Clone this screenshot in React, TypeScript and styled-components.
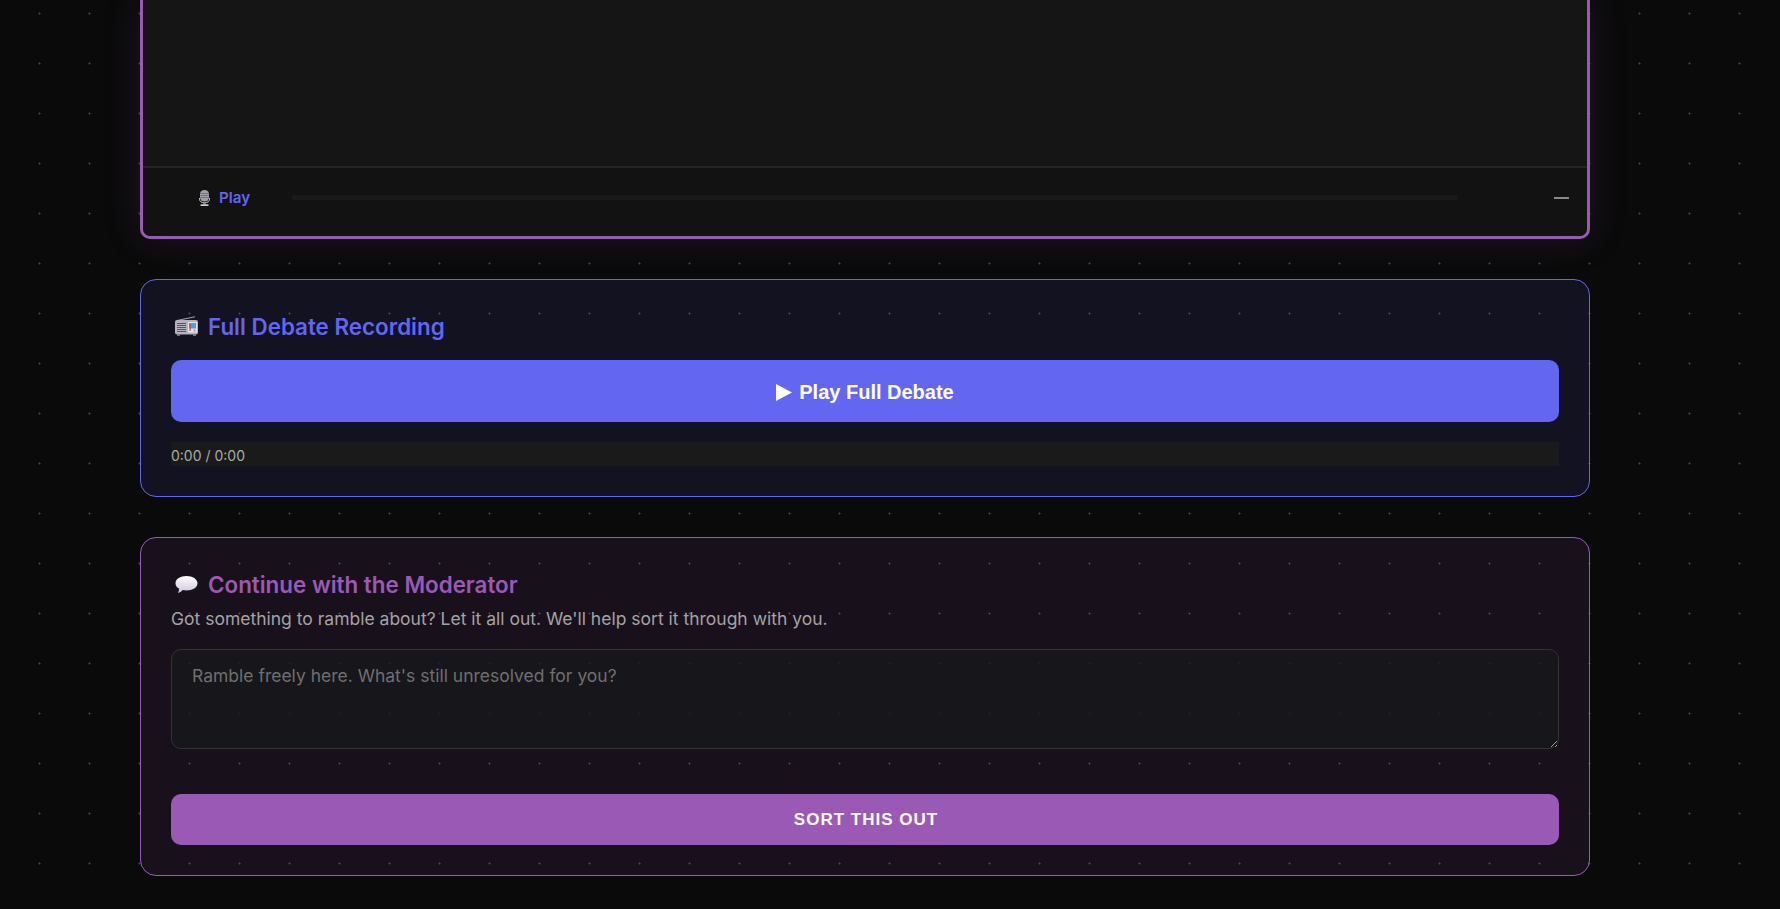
import React from 'react';
import styled, { createGlobalStyle } from 'styled-components';

const GlobalStyle = createGlobalStyle`
  html, body {
    margin: 0;
    padding: 0;
    background-color: #0a0a0a;
  }
  body {
    font-family: 'Inter', 'Liberation Sans', sans-serif;
    color: #e5e5e5;
    overflow: hidden;
  }
`;

const Page = styled.div`
  width: 1780px;
  height: 909px;
  overflow: hidden;
  box-sizing: border-box;
  padding: 0 190px 0 140px;
  display: flex;
  flex-direction: column;
  gap: 40px;
  position: relative;

  &::before {
    content: '';
    position: absolute;
    inset: 0;
    background-image: url("data:image/svg+xml,%3Csvg xmlns='http://www.w3.org/2000/svg' width='50' height='50'%3E%3Cpath d='M38 13.5h3M39.5 12v3' stroke='%232c2c2c' stroke-width='1'/%3E%3Crect x='39' y='13' width='1' height='1' fill='%23454545'/%3E%3C/svg%3E");
    background-size: 50px 50px;
    pointer-events: none;
  }
`;

const Stage = styled.section`
  position: relative;
  height: 239px;
  box-sizing: border-box;
  display: flex;
  flex-direction: column;
  justify-content: flex-end;
  background: #151515;
  border: 3px solid #9b59b6;
  border-top: none;
  border-radius: 0 0 10px 10px;
  box-shadow: 0 0 40px rgba(155, 89, 182, 0.14);
  flex: none;
`;

const Controls = styled.div`
  height: 70px;
  box-sizing: border-box;
  display: flex;
  align-items: center;
  gap: 42px;
  padding: 0 18px 9px 56px;
  background: #121212;
  border-top: 2px solid #252525;
  border-radius: 0 0 8px 8px;
`;

const PlayLabel = styled.div`
  display: flex;
  align-items: center;
  gap: 9px;
  color: #6366f1;
  font-size: 15.2px;
  font-weight: 600;
`;

const Track = styled.div`
  flex: 1;
  height: 5px;
  border-radius: 2px;
  background: #1a1a1a;
`;

const Dash = styled.span`
  width: 15px;
  height: 2px;
  margin-left: 54px;
  background: #888888;
`;

const Panel = styled.section<{ $accent: string; $tint: string }>`
  position: relative;
  flex: none;
  box-sizing: border-box;
  padding: 30px;
  border: 1px solid ${({ $accent }) => $accent};
  border-radius: 16px;
  background: ${({ $tint }) => $tint};
`;

const Heading = styled.h3<{ $accent: string }>`
  margin: 0;
  display: flex;
  align-items: center;
  gap: 10px;
  height: 30px;
  box-sizing: border-box;
  padding: 2px 0 0 4px;
  font-size: 22.4px;
  font-weight: 600;
  line-height: 27px;
  color: ${({ $accent }) => $accent};
`;

const PlayButton = styled.button`
  display: flex;
  align-items: center;
  justify-content: center;
  gap: 7px;
  width: 100%;
  height: 62px;
  margin-top: 20px;
  padding: 2px 0 0;
  border: none;
  border-radius: 10px;
  background: #6366f1;
  color: #ffffff;
  font-family: 'Liberation Sans', Arial, sans-serif;
  font-size: 20px;
  font-weight: 700;
`;

const AudioBar = styled.div`
  height: 24px;
  margin-top: 20px;
  background: #1a1a1a;
  color: #aaaaaa;
  font-size: 14px;
  line-height: 27px;
`;

const Blurb = styled.p`
  margin: 7px 0 0;
  font-size: 17.5px;
  line-height: 28px;
  color: #a3a3a3;
`;

const Ramble = styled.textarea`
  display: block;
  box-sizing: border-box;
  width: 100%;
  height: 100px;
  margin-top: 16px;
  padding: 14px 20px;
  border: 1px solid #333333;
  border-radius: 10px;
  background: rgba(24, 24, 27, 0.8);
  color: #e5e5e5;
  color-scheme: dark;
  font-family: 'Inter', sans-serif;
  font-size: 17.5px;
  line-height: 24px;
  outline: none;

  &::placeholder {
    color: #6f6f6f;
  }
`;

const SortButton = styled.button`
  display: block;
  width: 100%;
  height: 51px;
  margin-top: 45px;
  padding: 0 0 0 2px;
  border: none;
  border-radius: 10px;
  background: #9b59b6;
  color: #ffffff;
  font-family: 'Liberation Sans', Arial, sans-serif;
  font-size: 17px;
  font-weight: 700;
  letter-spacing: 1px;
`;

const TriangleIcon = () => (
  <svg width="16" height="17" viewBox="0 0 16 17" aria-hidden="true">
    <path d="M0 0 L16 8.500 L0 17z" fill="#ffffff" />
  </svg>
);

const MicIcon = () => (
  <svg width="11" height="16" viewBox="0 0 11 16" aria-hidden="true">
    <rect x="1" y="0" width="9" height="11.500" rx="4.2" fill="#a19da6" />
    <path d="M1.500 3.500h8M1.500 5.500h8M1.500 7.500h8" stroke="#6f6b74" strokeWidth="0.8" />
    <path d="M0.500 8v1.200c0 2.300 2.200 3.600 5 3.600s5-1.300 5-3.600V8" fill="none" stroke="#c4c1c8" strokeWidth="1" />
    <rect x="4.200" y="12.500" width="2.600" height="2" fill="#8a868e" />
    <rect x="1.500" y="14.300" width="8" height="1.700" rx="0.500" fill="#c9c6cc" />
  </svg>
);

const RadioIcon = () => (
  <svg width="23" height="20" viewBox="0 0 23 20" aria-hidden="true">
    <path d="M2 4.500 L20 0.700" stroke="#a3a0a6" strokeWidth="1.100" />
    <rect x="0" y="4" width="23" height="14.500" rx="2" fill="#b6b2bc" />
    <path d="M2 7.500h9M2 9.500h9M2 11.500h9M2 13.500h9M2 15.500h9" stroke="#5a5660" strokeWidth="1" />
    <rect x="13" y="6" width="9" height="10.500" rx="0.500" fill="#e6e4e9" />
    <rect x="14" y="7" width="7" height="5.500" fill="#3aa6ee" />
    <rect x="14.500" y="8" width="1.200" height="7" fill="#d0443e" />
    <rect x="18.500" y="13.500" width="2" height="2" fill="#e58a84" />
    <rect x="2" y="18.500" width="3" height="1.300" fill="#8b888f" />
    <rect x="18" y="18.500" width="3" height="1.300" fill="#8b888f" />
  </svg>
);

const BubbleIcon = () => (
  <svg width="23" height="20" viewBox="0 -1.500 23 20" aria-hidden="true">
    <defs>
      <linearGradient id="bubble" x1="0" y1="0" x2="0" y2="1">
        <stop offset="0" stopColor="#ffffff" />
        <stop offset="1" stopColor="#cdc5dd" />
      </linearGradient>
    </defs>
    <path
      d="M11.500 0.500C5.400 0.500 0.500 3.500 0.500 7.800c0 2.300 1.400 4.200 3.700 5.500-.1 1.500-.6 3-1.300 4.200 2-.5 3.700-1.700 4.900-2.900 1.200.3 2.400.4 3.700.4 6.100 0 11-3 11-7.200S17.600 0.500 11.500 0.500z"
      fill="url(#bubble)"
    />
  </svg>
);

export default function App() {
  return (
    <>
      <GlobalStyle />
      <Page>
        <Stage>
          <Controls>
            <PlayLabel>
              <MicIcon />
              Play
            </PlayLabel>
            <Track />
            <Dash />
          </Controls>
        </Stage>

        <Panel $accent="#6366f1" $tint="rgba(99, 102, 241, 0.1)">
          <Heading $accent="#6366f1">
            <RadioIcon />
            Full Debate Recording
          </Heading>
          <PlayButton>
            <TriangleIcon />
            Play Full Debate
          </PlayButton>
          <AudioBar>0:00 / 0:00</AudioBar>
        </Panel>

        <Panel $accent="#9b59b6" $tint="rgba(155, 89, 182, 0.1)">
          <Heading $accent="#9b59b6">
            <BubbleIcon />
            Continue with the Moderator
          </Heading>
          <Blurb>Got something to ramble about? Let it all out. We'll help sort it through with you.</Blurb>
          <Ramble placeholder="Ramble freely here. What's still unresolved for you?" />
          <SortButton>SORT THIS OUT</SortButton>
        </Panel>
      </Page>
    </>
  );
}
